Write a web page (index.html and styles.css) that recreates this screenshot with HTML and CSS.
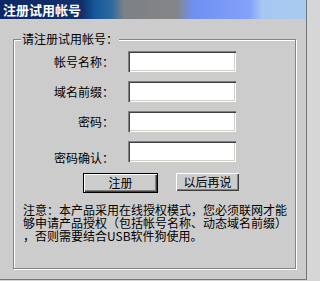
FILE: index.html
```html
<!DOCTYPE html>
<html lang="zh-CN">
<head>
<meta charset="utf-8">
<title>注册试用帐号</title>
<link rel="stylesheet" href="styles.css">
</head>
<body>
<div class="window">
  <div class="titlebar">注册试用帐号</div>
  <div class="group">
    <span class="legend">请注册试用帐号：</span>
    <div class="form">
      <label class="label">帐号名称：</label><input class="field" type="text">
      <label class="label">域名前缀：</label><input class="field" type="text">
      <label class="label">密码：</label><input class="field" type="password">
      <label class="label row4">密码确认：</label><input class="field row4" type="password">
    </div>
    <div class="buttons">
      <button class="btn default">注册</button>
      <button class="btn second">以后再说</button>
    </div>
    <p class="note">注意：本产品采用在线授权模式，您必须联网才能<br>够申请产品授权（包括帐号名称、动态域名前缀）<br>，否则需要结合USB软件狗使用。</p>
  </div>
</div>
</body>
</html>
```
FILE: styles.css
```css
html, body {
  margin: 0;
  padding: 0;
}
body {
  width: 309px;
  height: 281px;
  background: #d6d6d6;
  font-family: "Noto Sans CJK SC", "Noto Sans", sans-serif;
  font-size: 12px;
  color: #000;
  overflow: hidden;
}
.window {
  width: 306px;
  height: 279px;
  background: #cccccc;
  border-right: 1px solid #767676;
  border-bottom: 1px solid #767676;
  display: flex;
  flex-direction: column;
}
.titlebar {
  height: 19px;
  line-height: 19px;
  padding-left: 3px;
  color: #fff;
  font-weight: bold;
  font-size: 13px;
  background: linear-gradient(to right,
    #0e2866 0px, #10306c 82px, #15589a 95px, #2f6a9c 112px,
    #7c8186 124px, #858585 176px, #6f8ff0 192px, #84a2fa 250px,
    #a6c8f0 262px, #a9caf0 306px);
}
.group {
  position: relative;
  margin: 20px 10px 0 13px;
  height: 230px;
  box-sizing: border-box;
  border: 1px solid #848484;
  box-shadow: inset 1px 1px 0 #fff, 1px 1px 0 #fff;
  padding-top: 11px;
}
.legend {
  position: absolute;
  top: -8px;
  left: 7px;
  padding: 0 1px;
  line-height: 14px;
  background: #cccccc;
}
.form {
  display: grid;
  grid-template-columns: 100px 108px;
  grid-auto-rows: 21px;
  column-gap: 14px;
  row-gap: 9px;
}
.label {
  text-align: right;
  line-height: 21px;
  white-space: nowrap;
}
.row4 {
  margin-top: 6px;
}
.field {
  box-sizing: border-box;
  width: 108px;
  height: 21px;
  margin: 0;
  padding: 0 3px;
  border: 0;
  background: #fff;
  font: inherit;
  outline: none;
  box-shadow: inset 1px 1px 0 #808080, inset 2px 2px 0 #404040,
              inset -1px -1px 0 #fff, inset -2px -2px 0 #d4d0c8;
}
.buttons {
  display: flex;
  align-items: flex-start;
  margin-top: 11px;
  padding-left: 69px;
  gap: 18px;
}
.btn {
  box-sizing: border-box;
  margin: 0;
  padding: 0;
  font: inherit;
  color: #000;
  background: #cccccc;
  line-height: 16px;
  cursor: default;
}
.default {
  width: 75px;
  height: 20px;
  border: 1px solid #000;
  box-shadow: inset 1px 1px 0 #fff, inset -1px -1px 0 #404040, inset -2px -2px 0 #808080;
}
.second {
  width: 63px;
  height: 18px;
  border: 0;
  box-shadow: inset 1px 1px 0 #fff, inset -1px -1px 0 #404040, inset -2px -2px 0 #808080;
}
.note {
  margin: 10px 0 0 0;
  padding-left: 9px;
  line-height: 13px;
  white-space: nowrap;
}
```
